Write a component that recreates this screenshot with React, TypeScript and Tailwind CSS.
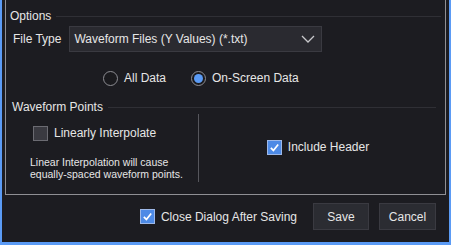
import React from 'react';

const Check: React.FC<{ checked?: boolean }> = ({ checked }) =>
  checked ? (
    <span className="flex h-[15px] w-[15px] items-center justify-center border border-[#9db8e8] bg-[#4d8ae6]">
      <svg viewBox="0 0 12 12" className="h-[11px] w-[11px]">
        <path d="M2 6.5 L4.8 9.2 L10 2.8" fill="none" stroke="#fff" strokeWidth="1.9" />
      </svg>
    </span>
  ) : (
    <span className="h-[15px] w-[15px] border border-[#6b6b72] bg-[#3a3a41]" />
  );

const Radio: React.FC<{ checked?: boolean }> = ({ checked }) => (
  <span className="flex h-[15px] w-[15px] items-center justify-center rounded-full border border-[#8d8d93] bg-[#1a1a1e]">
    {checked && <span className="h-[9px] w-[9px] rounded-full bg-[#5b9bf5]" />}
  </span>
);

export default function App() {
  return (
    <div
      className="flex h-[245px] w-[451px] flex-col border-x-2 border-b-[3px] border-[#5b9bf5] bg-[#1c1c21] text-[12px] text-[#e6e6e6]"
      style={{ fontFamily: '"Liberation Sans", Arial, sans-serif' }}
    >
      <div className="mx-[3px] flex h-[195px] shrink-0 flex-col border-x border-b border-[#8f8f94]">
        <div className="flex items-center pl-[4px] pr-[4px] pt-[7px]">
          <span>Options</span>
          <span className="ml-[5px] h-px flex-1 bg-[#2f2f35]" />
        </div>
        <div className="mt-[1px] flex items-center pl-[7px]">
          <span>File Type</span>
          <div className="ml-[8px] flex h-[26px] w-[253px] items-center justify-between border border-[#3a3a41] bg-[#2a2a30] pl-[4px] pr-[6px]">
            <span>Waveform Files (Y Values) (*.txt)</span>
            <svg viewBox="0 0 14 8" className="h-[8px] w-[14px]">
              <path d="M1 1 L7 7 L13 1" fill="none" stroke="#c8c8cc" strokeWidth="1.3" />
            </svg>
          </div>
        </div>
        <div className="mt-[17px] flex items-center pl-[97px]">
          <Radio />
          <span className="ml-[6px]">All Data</span>
          <span className="ml-[25px]">
            <Radio checked />
          </span>
          <span className="ml-[6px]">On-Screen Data</span>
        </div>
        <div className="mt-[11px] flex items-center pl-[6px] pr-[9px]">
          <span>Waveform Points</span>
          <span className="ml-[5px] h-px flex-1 bg-[#2f2f35]" />
        </div>
        <div className="-mt-[2px] flex items-start">
          <div className="flex w-[192px] flex-col pl-[27px] pt-[10px]">
            <div className="flex items-center">
              <Check />
              <span className="ml-[6px]">Linearly Interpolate</span>
            </div>
            <div className="mt-[14px] -ml-[3px] text-[10.5px] leading-[12px]">
              <div>Linear Interpolation will cause</div>
              <div>equally-spaced waveform points.</div>
            </div>
          </div>
          <span className="h-[68px] w-px bg-[#56565c]" />
          <div className="flex h-[66px] flex-1 items-center justify-center pr-[8px]">
            <Check checked />
            <span className="ml-[6px]">Include Header</span>
          </div>
        </div>
      </div>
      <div className="mt-[8px] flex items-center justify-end pr-[13px]">
        <Check checked />
        <span className="ml-[6px]">Close Dialog After Saving</span>
        <button className="ml-[16px] h-[27px] w-[56px] border border-[#3a3a41] bg-[#2b2c32]">Save</button>
        <button className="ml-[10px] h-[27px] w-[57px] border border-[#3a3a41] bg-[#2b2c32]">Cancel</button>
      </div>
    </div>
  );
}
